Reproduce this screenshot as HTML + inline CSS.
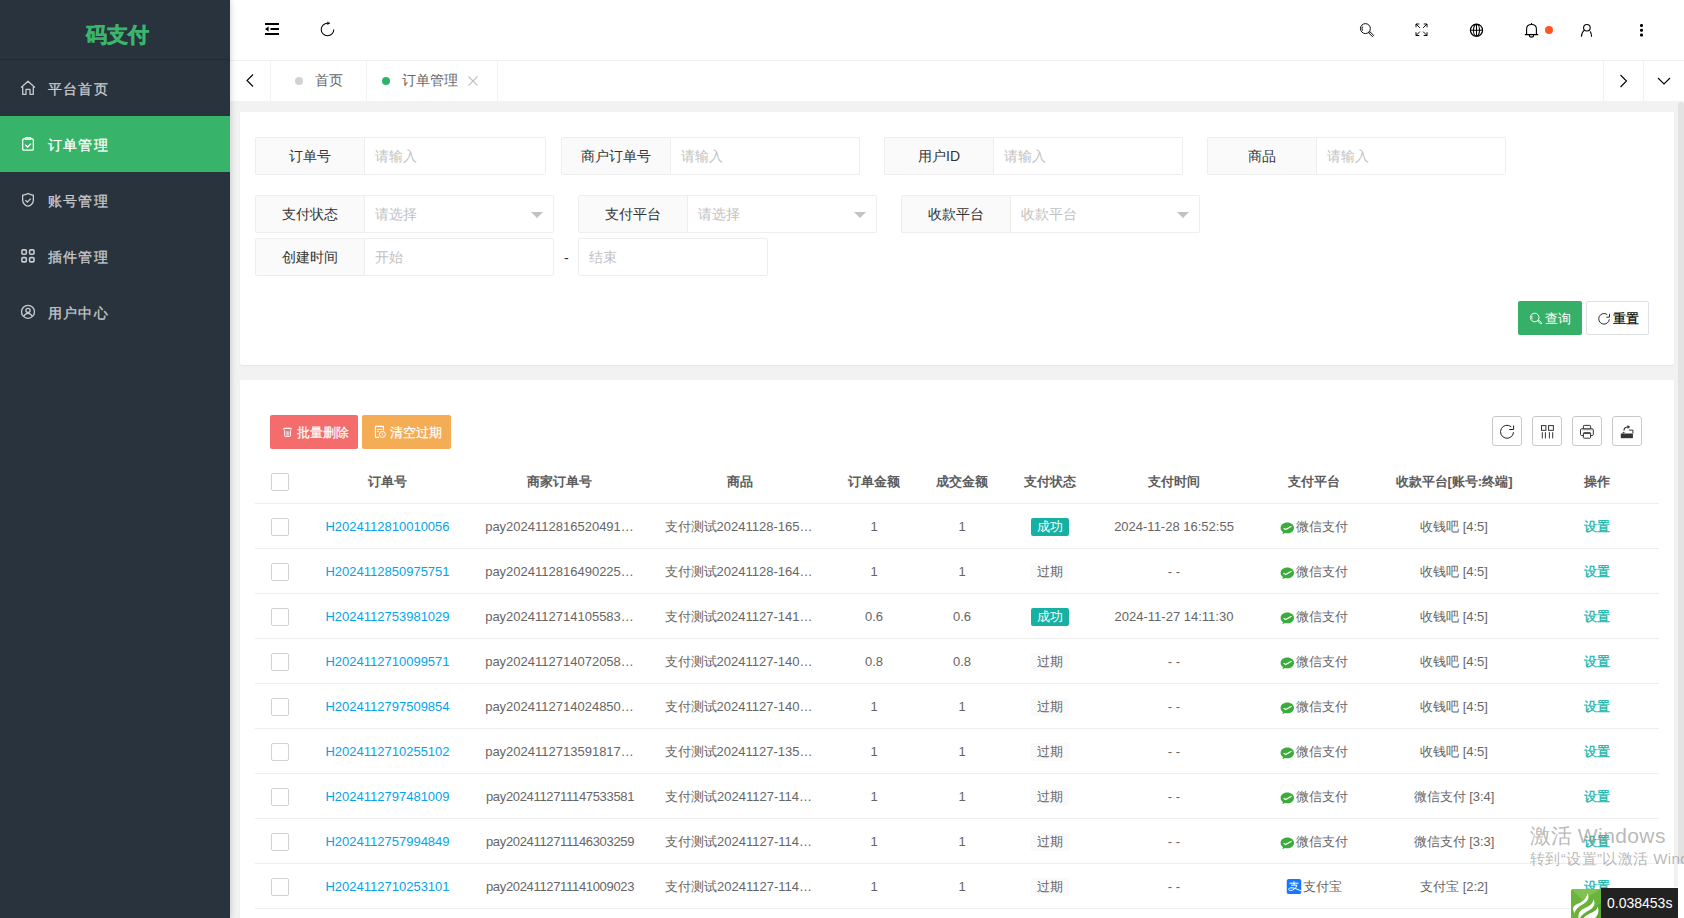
<!DOCTYPE html>
<html><head><meta charset="utf-8">
<style>
*{margin:0;padding:0;box-sizing:border-box}
html,body{width:1684px;height:918px;overflow:hidden;background:#fff;font-family:"Liberation Sans",sans-serif;color:#333}
.abs{position:absolute}
#side{position:absolute;left:0;top:0;width:230px;height:918px;background:#28333e;z-index:5;box-shadow:1px 0 6px rgba(0,0,0,.16)}
#logo{position:absolute;left:0;top:0;width:230px;height:60px;border-bottom:1px solid #232c36;color:#3bb56b;font-size:21px;font-weight:bold}
#logo span{position:absolute;left:86px;top:22px;line-height:26px;-webkit-text-stroke:0.6px #3bb56b}
.mi{position:absolute;left:0;width:230px;height:56px;color:#c8cacd;font-size:14px;letter-spacing:1.2px;-webkit-text-stroke:0.3px #c8cacd}
.mi.on span{-webkit-text-stroke:0.3px #fff}
.mi.on{background:#37b36a;color:#fff}
.mi svg{position:absolute;left:20px;top:19px}
.mi span{position:absolute;left:48px;top:1px;line-height:56px}
#main{position:absolute;left:230px;top:0;width:1454px;height:918px;background:#f2f2f2}
#hdr{position:absolute;left:0;top:0;width:1454px;height:61px;background:#fff;border-bottom:1px solid #f0f0f0}
#tabs{position:absolute;left:0;top:61px;width:1454px;height:40px;background:#fff}
.sep{position:absolute;top:0;width:1px;height:40px;background:#f2f2f2}
.card{position:absolute;background:#fff;border-radius:2px;box-shadow:0 1px 2px rgba(0,0,0,.06)}
.lbl{position:absolute;height:38px;background:#fafafa;border:1px solid #eee;border-radius:2px 0 0 2px;font-size:14px;color:#333;text-align:center;line-height:36px}
.inp{position:absolute;height:38px;background:#fff;border:1px solid #eee;border-left:none;border-radius:0 2px 2px 0;font-size:14px;color:#c2c2c2;line-height:36px;padding-left:10px}
.inp2{border-left:1px solid #eee;border-radius:2px}
.tri{position:absolute;top:16px;right:10px;width:0;height:0;border-left:6px solid transparent;border-right:6px solid transparent;border-top:6px solid #c2c2c2}
.th{position:absolute;top:459px;height:45px;line-height:45px;font-size:13px;font-weight:bold;color:#5c5c5c;white-space:nowrap;transform:translateX(-50%)}
.hl{position:absolute;left:15px;width:1404px;height:1px;background:#eee}
.cb{position:absolute;left:31px;width:18px;height:18px;border:1px solid #d2d2d2;border-radius:2px;background:#fff}
.td{position:absolute;height:45px;line-height:47px;font-size:13px;color:#666;white-space:nowrap;transform:translateX(-50%)}
.lnk{color:#06a3ea}
.op{color:#16b5a8;-webkit-text-stroke:0.3px #16b5a8}
.bdg{display:inline-block;height:18px;line-height:18px;padding:0 6px;border-radius:2px;font-size:13px;vertical-align:middle;position:relative;top:-1px}
.ok{background:#16b1a3;color:#fff}
.exp{background:#fafafa;color:#666}
.btn{border-radius:2px;font-size:13px;white-space:nowrap}
.tool{width:30px;height:30px;border:1px solid #c9c9c9;border-radius:3px;background:#fff}
.tool svg{position:absolute;left:6px;top:7px}
.wx{position:relative;top:1px;vertical-align:middle;margin-right:1px}
#wm1{position:absolute;left:1530px;top:823px;font-size:21px;color:rgba(140,140,140,.62);white-space:nowrap;line-height:26px;z-index:9}
#wm2{position:absolute;left:1530px;top:850px;font-size:15px;letter-spacing:0.4px;color:rgba(140,140,140,.62);white-space:nowrap;line-height:18px;z-index:9}
#thumb{position:absolute;left:1678px;top:102px;width:6px;height:762px;background:#e3e3e3;border-radius:3px}
#track{position:absolute;left:1678px;top:800px;width:6px;height:118px;background:#fff}
#wgap{position:absolute;left:1674px;top:887px;width:10px;height:31px;background:#fff}
#timer{z-index:10;position:absolute;left:1601px;top:888px;width:77px;height:30px;background:#222;color:#fff;font-size:14px;line-height:30px;padding-left:6px}
#tlogo{position:absolute;left:1571px;top:889px;width:30px;height:29px;background:#6cb33e;border-radius:3px 0 0 0;overflow:hidden;z-index:10}
</style></head><body>
<div id="side">
  <div id="logo"><span>码支付</span></div>
  <div class="mi" style="top:60px"><svg width="16" height="17" viewBox="0 0 16 17" fill="none" stroke="#c8cacd" stroke-width="1.3" stroke-linejoin="round"><path d="M8 2.3L14.6 8.2H13.3V15.3H10V10.3H6V15.3H2.7V8.2H1.4Z"/></svg><span>平台首页</span></div>
  <div class="mi on" style="top:116px"><svg width="16" height="17" viewBox="0 0 16 17" fill="none" stroke="#fff" stroke-width="1.3"><rect x="2.65" y="3.95" width="10.7" height="11.2" rx="1.2"/><rect x="5.25" y="2.65" width="5.6" height="1.5" rx="0.75" fill="#37b36a"/><path d="M5.2 9.8L7.6 12L11 8.6"/></svg><span>订单管理</span></div>
  <div class="mi" style="top:172px"><svg width="16" height="17" viewBox="0 0 16 17" fill="none" stroke="#c8cacd" stroke-width="1.3"><path d="M8 2.6C7 3.4 4 3.8 2.65 4.2V9C2.65 12.5 5.5 14.8 8 15.2C10.5 14.8 13.35 12.5 13.35 9V4.2C12 3.8 9 3.4 8 2.6Z"/><path d="M5.3 9.3L7.3 11L10.8 7.6"/></svg><span>账号管理</span></div>
  <div class="mi" style="top:228px"><svg width="16" height="17" viewBox="0 0 16 17" fill="none" stroke="#c8cacd" stroke-width="1.6"><rect x="1.9" y="2.9" width="4.4" height="4.3" rx="1"/><rect x="9.6" y="2.9" width="4.4" height="4.3" rx="1"/><rect x="1.9" y="10.6" width="4.4" height="4.3" rx="1"/><rect x="9.6" y="10.6" width="4.4" height="4.3" rx="1"/></svg><span>插件管理</span></div>
  <div class="mi" style="top:284px"><svg width="16" height="17" viewBox="0 0 16 17" fill="none" stroke="#c8cacd" stroke-width="1.35"><circle cx="8" cy="8.8" r="6.5"/><circle cx="8" cy="7.4" r="2.1"/><path d="M3.9 13.4C4.6 11.3 6 10.3 8 10.3C10 10.3 11.4 11.3 12.1 13.4"/></svg><span>用户中心</span></div>
</div>
<div id="main">
  <div id="hdr">
    <svg class="abs" style="left:34px;top:22px" width="16" height="14" viewBox="0 0 16 14"><path d="M1 2H15M6.5 7H15M1 12H15" stroke="#000" stroke-width="2"/><path d="M1 7L4.6 4.6V9.4Z" fill="#000"/></svg>
    <svg class="abs" style="left:90px;top:21px" width="16" height="17" viewBox="0 0 16 17" fill="none" stroke="#000" stroke-width="1.05"><path d="M7.5 2.2A6.3 6.3 0 1 0 13.8 8.5"/><path d="M7.4 0.9L10.1 2.2L7.4 3.5Z" fill="#000" stroke-width="0.4"/></svg>
    <svg class="abs" style="left:1129px;top:22px" width="16" height="16" viewBox="0 0 16 16" fill="none" stroke="#000" stroke-width="0.95"><circle cx="6.4" cy="6.6" r="4.95"/><path d="M3.6 4.6A3.6 3.6 0 0 0 3.6 8.6"/><path d="M9.7 10.9L10.9 9.7L14.6 13.4L13.4 14.6Z"/></svg>
    <svg class="abs" style="left:1184px;top:23px" width="15" height="14" viewBox="0 0 15 14" fill="none" stroke="#000" stroke-width="0.95"><path d="M2 4.3V1H5.3M2 1L5.9 4.9M13 4.3V1H9.7M13 1L9.1 4.9M2 9.2V12.5H5.3M2 12.5L5.9 8.6M13 9.2V12.5H9.7M13 12.5L9.1 8.6"/></svg>
    <svg class="abs" style="left:1239px;top:23px" width="15" height="15" viewBox="0 0 15 15" fill="none" stroke="#000" stroke-width="1.05"><circle cx="7.5" cy="7.2" r="6.05" stroke-width="1.2"/><path d="M1.4 7.3H13.6M7.5 1.2V13.2M4.5 1.8H10.5"/><ellipse cx="7.5" cy="7.2" rx="3" ry="6"/></svg>
    <svg class="abs" style="left:1294px;top:22px" width="16" height="17" viewBox="0 0 16 17" fill="none" stroke="#000" stroke-width="1.1"><path d="M2.6 12.5V7C2.6 3.8 5 2.5 7.5 2.5C10 2.5 12.4 3.8 12.4 7V12.5"/><path d="M0.8 12.6H14.2" stroke-width="1.3"/><path d="M5.3 12.9A2.2 2.2 0 0 0 9.7 12.9"/><path d="M7.5 1V2.6"/></svg>
    <div class="abs" style="left:1315px;top:26px;width:8px;height:8px;border-radius:50%;background:#ff5722"></div>
    <svg class="abs" style="left:1350px;top:22px" width="14" height="16" viewBox="0 0 14 16" fill="none" stroke="#000" stroke-width="1.1"><circle cx="6.9" cy="5.75" r="3.3"/><path d="M4.1 8.4C2.5 9.6 1.6 11.8 1.4 14.8M10.2 9.4C11.1 10.7 11.5 12.6 11.6 14.8"/></svg>
    <div class="abs" style="left:1410px;top:24px;width:2.6px;height:2.6px;border-radius:50%;background:#000;box-shadow:0 4.8px 0 #000,0 9.6px 0 #000"></div>
  </div>
  <div id="tabs">
    <svg class="abs" style="left:15px;top:12px" width="10" height="15" viewBox="0 0 10 15" fill="none" stroke="#000" stroke-width="1.1"><path d="M8 1.5L2 7.5L8 13.5"/></svg>
    <div class="sep" style="left:40px"></div>
    <div class="abs" style="left:65px;top:16px;width:8px;height:8px;border-radius:50%;background:#d2d2d2"></div>
    <div class="abs" style="left:85px;top:-1px;line-height:40px;font-size:14px;color:#666">首页</div>
    <div class="sep" style="left:136px"></div>
    <div class="abs" style="left:152px;top:16px;width:8px;height:8px;border-radius:50%;background:#2fb36b"></div>
    <div class="abs" style="left:172px;top:-1px;line-height:40px;font-size:14px;color:#666">订单管理</div>
    <svg class="abs" style="left:238px;top:15px" width="10" height="10" viewBox="0 0 10 10" stroke="#c2c2c2" stroke-width="1.1"><path d="M0.5 0.5L9.5 9.5M9.5 0.5L0.5 9.5"/></svg>
    <div class="sep" style="left:267px"></div>
    <div class="sep" style="left:1373px"></div>
    <svg class="abs" style="left:1389px;top:13px" width="9" height="14" viewBox="0 0 9 14" fill="none" stroke="#000" stroke-width="1.1"><path d="M1.5 1L7.5 7L1.5 13"/></svg>
    <div class="sep" style="left:1413px"></div>
    <svg class="abs" style="left:1427px;top:16px" width="14" height="8" viewBox="0 0 14 8" fill="none" stroke="#000" stroke-width="1.1"><path d="M1 1L7 7L13 1"/></svg>
  </div>
  <!-- form card -->
  <div class="card" style="left:10px;top:112px;width:1434px;height:253px"></div>
  <div class="lbl" style="left:25px;top:137px;width:110px">订单号</div><div class="inp" style="left:135px;top:137px;width:181px">请输入</div>
  <div class="lbl" style="left:331px;top:137px;width:110px">商户订单号</div><div class="inp" style="left:441px;top:137px;width:189px">请输入</div>
  <div class="lbl" style="left:654px;top:137px;width:110px">用户ID</div><div class="inp" style="left:764px;top:137px;width:189px">请输入</div>
  <div class="lbl" style="left:977px;top:137px;width:110px">商品</div><div class="inp" style="left:1087px;top:137px;width:189px">请输入</div>
  <div class="lbl" style="left:25px;top:195px;width:110px">支付状态</div><div class="inp" style="left:135px;top:195px;width:189px">请选择<i class="tri"></i></div>
  <div class="lbl" style="left:348px;top:195px;width:110px">支付平台</div><div class="inp" style="left:458px;top:195px;width:189px">请选择<i class="tri"></i></div>
  <div class="lbl" style="left:671px;top:195px;width:110px">收款平台</div><div class="inp" style="left:781px;top:195px;width:189px">收款平台<i class="tri"></i></div>
  <div class="lbl" style="left:25px;top:238px;width:110px">创建时间</div><div class="inp" style="left:135px;top:238px;width:189px">开始</div>
  <div class="abs" style="left:334px;top:248px;line-height:20px;font-size:14px;color:#333">-</div>
  <div class="inp inp2" style="left:348px;top:238px;width:190px">结束</div>
  <div class="abs btn" style="left:1288px;top:301px;width:64px;height:34px;background:#36b068;color:#fff">
<svg class="abs" style="left:11px;top:10px" width="14" height="15" viewBox="0 0 14 15" fill="none" stroke="#fff" stroke-width="0.95"><circle cx="5.7" cy="6.5" r="4.3"/><path d="M3.2 4.8A3 3 0 0 0 3.2 8.2"/><path d="M8.6 9.9L9.6 8.9L12.8 12.1L11.8 13.1Z"/></svg><span class="abs" style="left:27px;top:1px;line-height:34px">查询</span></div>
  <div class="abs btn" style="left:1356px;top:301px;width:63px;height:34px;background:#fff;border:1px solid #dcdfe6;color:#000">
<svg class="abs" style="left:10px;top:10px" width="15" height="15" viewBox="0 0 15 15" fill="none" stroke="#222" stroke-width="0.95"><path d="M10.2 2.6A5.3 5.3 0 1 0 12.3 7.3"/><path d="M9.3 5.2H12.5V1.9"/></svg><span class="abs" style="left:26px;top:1px;line-height:32px;-webkit-text-stroke:0.25px #000">重置</span></div>
  <!-- /form -->
  <!-- table card -->
  <div class="card" style="left:10px;top:380px;width:1434px;height:560px"></div>
  <div class="abs btn" style="left:40px;top:415px;width:88px;height:34px;background:#f56c6c;color:#fff">
<svg class="abs" style="left:12px;top:12px" width="11" height="11" viewBox="0 0 11 11" fill="none" stroke="#fff"><path d="M1.6 2.6Q1.6 1.4 2.8 1.4H8.2Q9.4 1.4 9.4 2.6" stroke-width="1.2"/><path d="M2.6 3.2V8.7Q2.6 9.4 3.3 9.4H7.7Q8.4 9.4 8.4 8.7V3.2" stroke-width="1"/><path d="M4.3 4.2V8.6M5.5 4.2V8.6M6.7 4.2V8.6" stroke-width="0.6"/></svg><span class="abs" style="left:27px;top:0;line-height:36px;-webkit-text-stroke:0.2px #fff">批量删除</span></div>
  <div class="abs btn" style="left:132px;top:415px;width:89px;height:34px;background:#f4ac55;color:#fff">
<svg class="abs" style="left:12px;top:10px" width="13" height="14" viewBox="0 0 13 14" fill="none" stroke="#fff"><path d="M5.2 12.4H2Q1.4 12.4 1.4 11.8V2Q1.4 1.4 2 1.4H8.8Q9.4 1.4 9.4 2V5.6" stroke-width="1.1"/><path d="M2.9 4.4H8M2.9 6.4H5" stroke-width="0.9"/><circle cx="8.4" cy="9.4" r="3" stroke-width="1"/><path d="M8.3 7.9V9.6L9.3 10.4" stroke-width="0.8"/></svg><span class="abs" style="left:28px;top:0;line-height:36px;-webkit-text-stroke:0.2px #fff">清空过期</span></div>
  <div class="abs tool" style="left:1262px;top:416px"><svg width="16" height="16" viewBox="0 0 16 16" fill="none" stroke="#222" stroke-width="1"><path d="M12.2 2.8A6.5 6.5 0 1 0 14.5 8.2"/><path d="M10.2 5.5H14.6V1.4"/></svg></div>
  <div class="abs tool" style="left:1302px;top:416px"><svg width="16" height="16" viewBox="0 0 16 16" fill="none" stroke="#333" stroke-width="1"><rect x="2.5" y="1.6" width="4.4" height="4.7"/><rect x="9.6" y="1.6" width="4.8" height="4.7"/><path d="M3.3 8.2V14.4M6.4 8.2V14.4M10.4 8.2V14.4M13.7 8.2V14.4"/></svg></div>
  <div class="abs tool" style="left:1342px;top:416px"><svg width="16" height="16" viewBox="0 0 16 16" fill="none" stroke="#333" stroke-width="1"><rect x="4.4" y="1.4" width="7.2" height="4" rx="0.8"/><path d="M4 11.5H2.6C1.9 11.5 1.5 11 1.5 10.3V6C1.5 5.3 1.9 4.8 2.6 4.8H13.2C13.9 4.8 14.3 5.3 14.3 6V10.3C14.3 11 13.9 11.5 13.2 11.5H12"/><path d="M3 5.8H13" stroke="#aaa"/><rect x="4.4" y="8.8" width="7.2" height="5.4" rx="0.8" fill="#fff"/><path d="M4.4 9.2H11.6" stroke-width="1.3"/></svg></div>
  <div class="abs tool" style="left:1382px;top:416px"><svg width="16" height="16" viewBox="0 0 16 16"><path d="M1.8 9.5H13.9V14.2H1.8Z" fill="#333"/><path d="M4.1 9.5V8.4H5.5M9.9 6.1H13.9V9.5" fill="none" stroke="#333" stroke-width="1"/><path d="M5 6.5C5 4.3 6.5 3 9 3" fill="none" stroke="#333" stroke-width="1.2"/><path d="M8.5 1L11.3 3L8.5 4.8Z" fill="#333"/></svg></div>
  <div class="cb" style="left:41px;top:473px"></div>
  <div class="th" style="left:157.5px">订单号</div>
  <div class="th" style="left:329.5px">商家订单号</div>
  <div class="th" style="left:509.5px">商品</div>
  <div class="th" style="left:644px">订单金额</div>
  <div class="th" style="left:732px">成交金额</div>
  <div class="th" style="left:820px">支付状态</div>
  <div class="th" style="left:944px">支付时间</div>
  <div class="th" style="left:1084px">支付平台</div>
  <div class="th" style="left:1224px">收款平台[账号:终端]</div>
  <div class="th" style="left:1367px">操作</div>
  <div class="hl" style="left:25px;top:503px"></div>
  <div class="cb" style="left:41px;top:518px"></div>
  <div class="td lnk" style="left:157.5px;top:503px">H2024112810010056</div>
  <div class="td" style="left:329.5px;top:503px">pay2024112816520491…</div>
  <div class="td" style="left:508.5px;top:503px">支付测试20241128-165…</div>
  <div class="td" style="left:644px;top:503px">1</div>
  <div class="td" style="left:732px;top:503px">1</div>
  <div class="td" style="left:820px;top:503px"><span class="bdg ok">成功</span></div>
  <div class="td" style="left:944px;top:503px">2024-11-28 16:52:55</div>
  <div class="td" style="left:1084px;top:503px"><svg class="wx" width="15" height="13" viewBox="0 0 15 13"><path d="M7.3 0.6C3.5 0.6 0.6 3 0.6 5.9C0.6 7.5 1.5 9 3 10L2.4 12.3L5 10.9C5.7 11.1 6.5 11.2 7.3 11.2C11.1 11.2 14 8.8 14 5.9C14 3 11.1 0.6 7.3 0.6Z" fill="#3bab3c"/><path d="M3.6 6.3L5.6 7.6L11.5 4.3" fill="none" stroke="#fff" stroke-width="1.3"/></svg>微信支付</div>
  <div class="td" style="left:1224px;top:503px">收钱吧 [4:5]</div>
  <div class="td op" style="left:1367px;top:503px">设置</div>
  <div class="hl" style="left:25px;top:548px"></div>
  <div class="cb" style="left:41px;top:563px"></div>
  <div class="td lnk" style="left:157.5px;top:548px">H2024112850975751</div>
  <div class="td" style="left:329.5px;top:548px">pay2024112816490225…</div>
  <div class="td" style="left:508.5px;top:548px">支付测试20241128-164…</div>
  <div class="td" style="left:644px;top:548px">1</div>
  <div class="td" style="left:732px;top:548px">1</div>
  <div class="td" style="left:820px;top:548px"><span class="bdg exp">过期</span></div>
  <div class="td" style="left:944px;top:548px">- -</div>
  <div class="td" style="left:1084px;top:548px"><svg class="wx" width="15" height="13" viewBox="0 0 15 13"><path d="M7.3 0.6C3.5 0.6 0.6 3 0.6 5.9C0.6 7.5 1.5 9 3 10L2.4 12.3L5 10.9C5.7 11.1 6.5 11.2 7.3 11.2C11.1 11.2 14 8.8 14 5.9C14 3 11.1 0.6 7.3 0.6Z" fill="#3bab3c"/><path d="M3.6 6.3L5.6 7.6L11.5 4.3" fill="none" stroke="#fff" stroke-width="1.3"/></svg>微信支付</div>
  <div class="td" style="left:1224px;top:548px">收钱吧 [4:5]</div>
  <div class="td op" style="left:1367px;top:548px">设置</div>
  <div class="hl" style="left:25px;top:593px"></div>
  <div class="cb" style="left:41px;top:608px"></div>
  <div class="td lnk" style="left:157.5px;top:593px">H2024112753981029</div>
  <div class="td" style="left:329.5px;top:593px">pay2024112714105583…</div>
  <div class="td" style="left:508.5px;top:593px">支付测试20241127-141…</div>
  <div class="td" style="left:644px;top:593px">0.6</div>
  <div class="td" style="left:732px;top:593px">0.6</div>
  <div class="td" style="left:820px;top:593px"><span class="bdg ok">成功</span></div>
  <div class="td" style="left:944px;top:593px">2024-11-27 14:11:30</div>
  <div class="td" style="left:1084px;top:593px"><svg class="wx" width="15" height="13" viewBox="0 0 15 13"><path d="M7.3 0.6C3.5 0.6 0.6 3 0.6 5.9C0.6 7.5 1.5 9 3 10L2.4 12.3L5 10.9C5.7 11.1 6.5 11.2 7.3 11.2C11.1 11.2 14 8.8 14 5.9C14 3 11.1 0.6 7.3 0.6Z" fill="#3bab3c"/><path d="M3.6 6.3L5.6 7.6L11.5 4.3" fill="none" stroke="#fff" stroke-width="1.3"/></svg>微信支付</div>
  <div class="td" style="left:1224px;top:593px">收钱吧 [4:5]</div>
  <div class="td op" style="left:1367px;top:593px">设置</div>
  <div class="hl" style="left:25px;top:638px"></div>
  <div class="cb" style="left:41px;top:653px"></div>
  <div class="td lnk" style="left:157.5px;top:638px">H2024112710099571</div>
  <div class="td" style="left:329.5px;top:638px">pay2024112714072058…</div>
  <div class="td" style="left:508.5px;top:638px">支付测试20241127-140…</div>
  <div class="td" style="left:644px;top:638px">0.8</div>
  <div class="td" style="left:732px;top:638px">0.8</div>
  <div class="td" style="left:820px;top:638px"><span class="bdg exp">过期</span></div>
  <div class="td" style="left:944px;top:638px">- -</div>
  <div class="td" style="left:1084px;top:638px"><svg class="wx" width="15" height="13" viewBox="0 0 15 13"><path d="M7.3 0.6C3.5 0.6 0.6 3 0.6 5.9C0.6 7.5 1.5 9 3 10L2.4 12.3L5 10.9C5.7 11.1 6.5 11.2 7.3 11.2C11.1 11.2 14 8.8 14 5.9C14 3 11.1 0.6 7.3 0.6Z" fill="#3bab3c"/><path d="M3.6 6.3L5.6 7.6L11.5 4.3" fill="none" stroke="#fff" stroke-width="1.3"/></svg>微信支付</div>
  <div class="td" style="left:1224px;top:638px">收钱吧 [4:5]</div>
  <div class="td op" style="left:1367px;top:638px">设置</div>
  <div class="hl" style="left:25px;top:683px"></div>
  <div class="cb" style="left:41px;top:698px"></div>
  <div class="td lnk" style="left:157.5px;top:683px">H2024112797509854</div>
  <div class="td" style="left:329.5px;top:683px">pay2024112714024850…</div>
  <div class="td" style="left:508.5px;top:683px">支付测试20241127-140…</div>
  <div class="td" style="left:644px;top:683px">1</div>
  <div class="td" style="left:732px;top:683px">1</div>
  <div class="td" style="left:820px;top:683px"><span class="bdg exp">过期</span></div>
  <div class="td" style="left:944px;top:683px">- -</div>
  <div class="td" style="left:1084px;top:683px"><svg class="wx" width="15" height="13" viewBox="0 0 15 13"><path d="M7.3 0.6C3.5 0.6 0.6 3 0.6 5.9C0.6 7.5 1.5 9 3 10L2.4 12.3L5 10.9C5.7 11.1 6.5 11.2 7.3 11.2C11.1 11.2 14 8.8 14 5.9C14 3 11.1 0.6 7.3 0.6Z" fill="#3bab3c"/><path d="M3.6 6.3L5.6 7.6L11.5 4.3" fill="none" stroke="#fff" stroke-width="1.3"/></svg>微信支付</div>
  <div class="td" style="left:1224px;top:683px">收钱吧 [4:5]</div>
  <div class="td op" style="left:1367px;top:683px">设置</div>
  <div class="hl" style="left:25px;top:728px"></div>
  <div class="cb" style="left:41px;top:743px"></div>
  <div class="td lnk" style="left:157.5px;top:728px">H2024112710255102</div>
  <div class="td" style="left:329.5px;top:728px">pay2024112713591817…</div>
  <div class="td" style="left:508.5px;top:728px">支付测试20241127-135…</div>
  <div class="td" style="left:644px;top:728px">1</div>
  <div class="td" style="left:732px;top:728px">1</div>
  <div class="td" style="left:820px;top:728px"><span class="bdg exp">过期</span></div>
  <div class="td" style="left:944px;top:728px">- -</div>
  <div class="td" style="left:1084px;top:728px"><svg class="wx" width="15" height="13" viewBox="0 0 15 13"><path d="M7.3 0.6C3.5 0.6 0.6 3 0.6 5.9C0.6 7.5 1.5 9 3 10L2.4 12.3L5 10.9C5.7 11.1 6.5 11.2 7.3 11.2C11.1 11.2 14 8.8 14 5.9C14 3 11.1 0.6 7.3 0.6Z" fill="#3bab3c"/><path d="M3.6 6.3L5.6 7.6L11.5 4.3" fill="none" stroke="#fff" stroke-width="1.3"/></svg>微信支付</div>
  <div class="td" style="left:1224px;top:728px">收钱吧 [4:5]</div>
  <div class="td op" style="left:1367px;top:728px">设置</div>
  <div class="hl" style="left:25px;top:773px"></div>
  <div class="cb" style="left:41px;top:788px"></div>
  <div class="td lnk" style="left:157.5px;top:773px">H2024112797481009</div>
  <div class="td" style="left:330px;letter-spacing:-0.33px;top:773px">pay2024112711147533581</div>
  <div class="td" style="left:508.5px;top:773px">支付测试20241127-114…</div>
  <div class="td" style="left:644px;top:773px">1</div>
  <div class="td" style="left:732px;top:773px">1</div>
  <div class="td" style="left:820px;top:773px"><span class="bdg exp">过期</span></div>
  <div class="td" style="left:944px;top:773px">- -</div>
  <div class="td" style="left:1084px;top:773px"><svg class="wx" width="15" height="13" viewBox="0 0 15 13"><path d="M7.3 0.6C3.5 0.6 0.6 3 0.6 5.9C0.6 7.5 1.5 9 3 10L2.4 12.3L5 10.9C5.7 11.1 6.5 11.2 7.3 11.2C11.1 11.2 14 8.8 14 5.9C14 3 11.1 0.6 7.3 0.6Z" fill="#3bab3c"/><path d="M3.6 6.3L5.6 7.6L11.5 4.3" fill="none" stroke="#fff" stroke-width="1.3"/></svg>微信支付</div>
  <div class="td" style="left:1224px;top:773px">微信支付 [3:4]</div>
  <div class="td op" style="left:1367px;top:773px">设置</div>
  <div class="hl" style="left:25px;top:818px"></div>
  <div class="cb" style="left:41px;top:833px"></div>
  <div class="td lnk" style="left:157.5px;top:818px">H2024112757994849</div>
  <div class="td" style="left:330px;letter-spacing:-0.33px;top:818px">pay2024112711146303259</div>
  <div class="td" style="left:508.5px;top:818px">支付测试20241127-114…</div>
  <div class="td" style="left:644px;top:818px">1</div>
  <div class="td" style="left:732px;top:818px">1</div>
  <div class="td" style="left:820px;top:818px"><span class="bdg exp">过期</span></div>
  <div class="td" style="left:944px;top:818px">- -</div>
  <div class="td" style="left:1084px;top:818px"><svg class="wx" width="15" height="13" viewBox="0 0 15 13"><path d="M7.3 0.6C3.5 0.6 0.6 3 0.6 5.9C0.6 7.5 1.5 9 3 10L2.4 12.3L5 10.9C5.7 11.1 6.5 11.2 7.3 11.2C11.1 11.2 14 8.8 14 5.9C14 3 11.1 0.6 7.3 0.6Z" fill="#3bab3c"/><path d="M3.6 6.3L5.6 7.6L11.5 4.3" fill="none" stroke="#fff" stroke-width="1.3"/></svg>微信支付</div>
  <div class="td" style="left:1224px;top:818px">微信支付 [3:3]</div>
  <div class="td op" style="left:1367px;top:818px">设置</div>
  <div class="hl" style="left:25px;top:863px"></div>
  <div class="cb" style="left:41px;top:878px"></div>
  <div class="td lnk" style="left:157.5px;top:863px">H2024112710253101</div>
  <div class="td" style="left:330px;letter-spacing:-0.33px;top:863px">pay2024112711141009023</div>
  <div class="td" style="left:508.5px;top:863px">支付测试20241127-114…</div>
  <div class="td" style="left:644px;top:863px">1</div>
  <div class="td" style="left:732px;top:863px">1</div>
  <div class="td" style="left:820px;top:863px"><span class="bdg exp">过期</span></div>
  <div class="td" style="left:944px;top:863px">- -</div>
  <div class="td" style="left:1084px;top:863px"><svg class="wx" width="15" height="15" viewBox="0 0 15 15" style="top:-1px"><rect width="15" height="15" rx="2.5" fill="#1677ff"/><path d="M3 4.2H12M7.5 2.2V6M4.5 6.2H10.5C9.5 9 7 11.5 3.8 11.5C2.5 11.5 2 10.8 2.2 10C2.6 8.6 5.5 8.3 9 9.6L15 12" fill="none" stroke="#fff" stroke-width="1"/></svg>支付宝</div>
  <div class="td" style="left:1224px;top:863px">支付宝 [2:2]</div>
  <div class="td op" style="left:1367px;top:863px">设置</div>
  <div class="hl" style="left:25px;top:908px"></div>
  <!-- /table -->
</div>
<div id="track"></div><div id="wgap"></div><div id="thumb"></div>
<div id="wm1">激活 <span style="letter-spacing:0.4px">Windows</span></div>
<div id="wm2">转到“设置”以激活 Windows。</div>
<div id="tlogo"><svg width="30" height="29" viewBox="0 0 30 29"><rect width="30" height="29" fill="#6ab43c"/><path d="M0 0H30L11.5 11Z" fill="#80c152"/><path d="M9 29L30 14V29Z" fill="#5ea833"/><path d="M16.5 4.3C18.5 8 17.5 12 13 14.5C9 17 5 19 3.6 24C1.5 21 1.5 17.5 4.5 16C9 13.5 15 12 16.5 4.3Z" fill="#fff"/><path d="M22.6 10.2C24.5 14 23.5 18 18.5 21C14 23.5 10.5 25.5 9 29H7.5C7 25 9 21.5 12 20C16.5 17.5 21.5 16.5 22.6 10.2Z" fill="#fff"/><path d="M26.6 17.6C28 21 28 26 24 29H12.5C15 26 18 25 21 23.5C24 22 26 21 26.6 17.6Z" fill="#fff"/></svg></div>
<div id="timer">0.038453s</div>
</body></html>
